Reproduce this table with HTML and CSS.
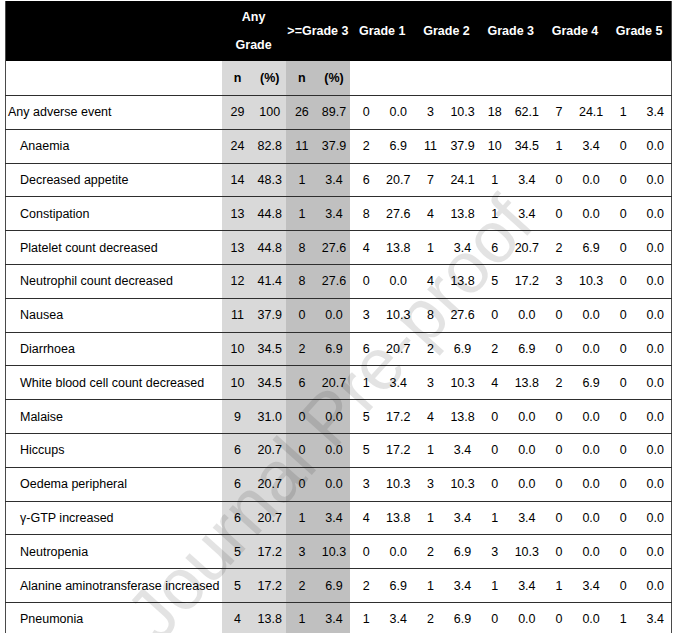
FILE: index.html
```html
<!DOCTYPE html>
<html>
<head>
<meta charset="utf-8">
<link rel="stylesheet" href="styles.css">
</head>
<body>
<div class="wrap">
<table class="ae">
<colgroup><col class="c-label"></colgroup>
<thead>
<tr class="h1">
<th></th>
<th colspan="2" class="anyg">Any<br>Grade</th>
<th colspan="2">&gt;=Grade 3</th>
<th colspan="2">Grade 1</th>
<th colspan="2">Grade 2</th>
<th colspan="2">Grade 3</th>
<th colspan="2">Grade 4</th>
<th colspan="2">Grade 5</th>
</tr>
<tr class="h2">
<th></th>
<th class="s1">n</th><th class="s1">(%)</th><th class="s2">n</th><th class="s2">(%)</th>
<th></th><th></th><th></th><th></th><th></th><th></th><th></th><th></th><th></th><th></th>
</tr>
</thead>
<tbody>
<tr><td class="lbl top">Any adverse event</td><td class="s1">29</td><td class="s1">100</td><td class="s2">26</td><td class="s2">89.7</td><td>0</td><td>0.0</td><td>3</td><td>10.3</td><td>18</td><td>62.1</td><td>7</td><td>24.1</td><td>1</td><td>3.4</td></tr>
<tr><td class="lbl">Anaemia</td><td class="s1">24</td><td class="s1">82.8</td><td class="s2">11</td><td class="s2">37.9</td><td>2</td><td>6.9</td><td>11</td><td>37.9</td><td>10</td><td>34.5</td><td>1</td><td>3.4</td><td>0</td><td>0.0</td></tr>
<tr><td class="lbl">Decreased appetite</td><td class="s1">14</td><td class="s1">48.3</td><td class="s2">1</td><td class="s2">3.4</td><td>6</td><td>20.7</td><td>7</td><td>24.1</td><td>1</td><td>3.4</td><td>0</td><td>0.0</td><td>0</td><td>0.0</td></tr>
<tr><td class="lbl">Constipation</td><td class="s1">13</td><td class="s1">44.8</td><td class="s2">1</td><td class="s2">3.4</td><td>8</td><td>27.6</td><td>4</td><td>13.8</td><td>1</td><td>3.4</td><td>0</td><td>0.0</td><td>0</td><td>0.0</td></tr>
<tr><td class="lbl">Platelet count decreased</td><td class="s1">13</td><td class="s1">44.8</td><td class="s2">8</td><td class="s2">27.6</td><td>4</td><td>13.8</td><td>1</td><td>3.4</td><td>6</td><td>20.7</td><td>2</td><td>6.9</td><td>0</td><td>0.0</td></tr>
<tr><td class="lbl">Neutrophil count decreased</td><td class="s1">12</td><td class="s1">41.4</td><td class="s2">8</td><td class="s2">27.6</td><td>0</td><td>0.0</td><td>4</td><td>13.8</td><td>5</td><td>17.2</td><td>3</td><td>10.3</td><td>0</td><td>0.0</td></tr>
<tr><td class="lbl">Nausea</td><td class="s1">11</td><td class="s1">37.9</td><td class="s2">0</td><td class="s2">0.0</td><td>3</td><td>10.3</td><td>8</td><td>27.6</td><td>0</td><td>0.0</td><td>0</td><td>0.0</td><td>0</td><td>0.0</td></tr>
<tr><td class="lbl">Diarrhoea</td><td class="s1">10</td><td class="s1">34.5</td><td class="s2">2</td><td class="s2">6.9</td><td>6</td><td>20.7</td><td>2</td><td>6.9</td><td>2</td><td>6.9</td><td>0</td><td>0.0</td><td>0</td><td>0.0</td></tr>
<tr><td class="lbl">White blood cell count decreased</td><td class="s1">10</td><td class="s1">34.5</td><td class="s2">6</td><td class="s2">20.7</td><td>1</td><td>3.4</td><td>3</td><td>10.3</td><td>4</td><td>13.8</td><td>2</td><td>6.9</td><td>0</td><td>0.0</td></tr>
<tr><td class="lbl">Malaise</td><td class="s1">9</td><td class="s1">31.0</td><td class="s2">0</td><td class="s2">0.0</td><td>5</td><td>17.2</td><td>4</td><td>13.8</td><td>0</td><td>0.0</td><td>0</td><td>0.0</td><td>0</td><td>0.0</td></tr>
<tr><td class="lbl">Hiccups</td><td class="s1">6</td><td class="s1">20.7</td><td class="s2">0</td><td class="s2">0.0</td><td>5</td><td>17.2</td><td>1</td><td>3.4</td><td>0</td><td>0.0</td><td>0</td><td>0.0</td><td>0</td><td>0.0</td></tr>
<tr><td class="lbl">Oedema peripheral</td><td class="s1">6</td><td class="s1">20.7</td><td class="s2">0</td><td class="s2">0.0</td><td>3</td><td>10.3</td><td>3</td><td>10.3</td><td>0</td><td>0.0</td><td>0</td><td>0.0</td><td>0</td><td>0.0</td></tr>
<tr><td class="lbl">γ-GTP increased</td><td class="s1">6</td><td class="s1">20.7</td><td class="s2">1</td><td class="s2">3.4</td><td>4</td><td>13.8</td><td>1</td><td>3.4</td><td>1</td><td>3.4</td><td>0</td><td>0.0</td><td>0</td><td>0.0</td></tr>
<tr><td class="lbl">Neutropenia</td><td class="s1">5</td><td class="s1">17.2</td><td class="s2">3</td><td class="s2">10.3</td><td>0</td><td>0.0</td><td>2</td><td>6.9</td><td>3</td><td>10.3</td><td>0</td><td>0.0</td><td>0</td><td>0.0</td></tr>
<tr><td class="lbl">Alanine aminotransferase increased</td><td class="s1">5</td><td class="s1">17.2</td><td class="s2">2</td><td class="s2">6.9</td><td>2</td><td>6.9</td><td>1</td><td>3.4</td><td>1</td><td>3.4</td><td>1</td><td>3.4</td><td>0</td><td>0.0</td></tr>
<tr><td class="lbl">Pneumonia</td><td class="s1">4</td><td class="s1">13.8</td><td class="s2">1</td><td class="s2">3.4</td><td>1</td><td>3.4</td><td>2</td><td>6.9</td><td>0</td><td>0.0</td><td>0</td><td>0.0</td><td>1</td><td>3.4</td></tr>
</tbody>
</table>
<div class="watermark">Journal Pre-proof</div>
</div>
</body>
</html>
```
FILE: styles.css
```css
html, body {
  margin: 0;
  padding: 0;
  background: #fff;
}
body {
  font-family: "Liberation Sans", Arial, sans-serif;
  font-size: 12.5px;
  color: #000;
  overflow: hidden;
}
.wrap {
  position: relative;
  width: 680px;
  height: 633px;
  overflow: hidden;
  padding: 1px 0 0 5px;
  box-sizing: border-box;
}
.ae {
  table-layout: fixed;
  border-collapse: collapse;
  width: 667px;
  border-left: 1px solid #4a4a4a;
  border-right: 1px solid #4a4a4a;
}
.c-label {
  width: 216px;
}
.ae th, .ae td {
  padding: 0;
  text-align: center;
  white-space: nowrap;
}
.h1 th {
  background: #000;
  color: #fff;
  font-weight: bold;
  height: 60px;
}
.h1 .anyg {
  line-height: 28px;
}
.h2 th {
  height: 34px;
  font-weight: bold;
  background: #fff;
}
.ae tbody td {
  height: 32.8px;
  border-top: 1px solid #2e2e2e;
}
.ae .s1 {
  background: #d9d9d9;
}
.ae .s2 {
  background: #c0c0c0;
}
.ae td.lbl {
  text-align: left;
  padding-left: 14px;
}
.ae td.lbl.top {
  padding-left: 2px;
}
.watermark {
  position: absolute;
  left: 329px;
  top: 418px;
  transform: translate(-50%, -50%) rotate(-48deg);
  font-family: "Liberation Sans", Arial, sans-serif;
  font-size: 73px;
  color: rgba(0, 0, 0, 0.11);
  white-space: nowrap;
  pointer-events: none;
}
```
